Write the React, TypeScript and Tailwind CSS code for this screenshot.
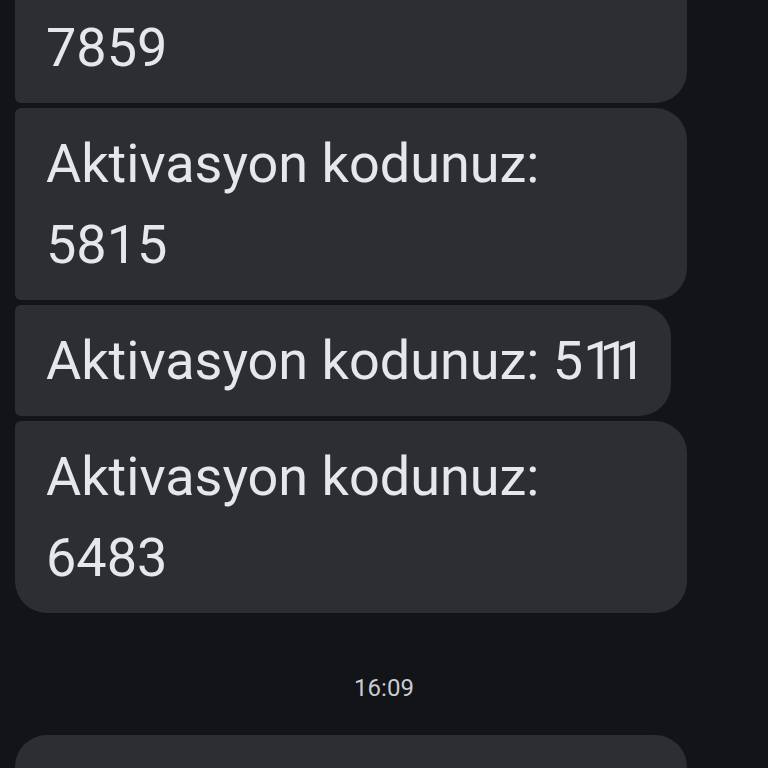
import { clsx } from 'clsx';

type Bubble = {
  lines: string[];
  wide: boolean;
  corners: string;
};

const font = { fontFamily: 'Roboto, "Noto Sans", sans-serif' };

const before: Bubble[] = [
  { lines: ['Aktivasyon kodunuz:', '7859'], wide: true, corners: 'rounded-l-[6px] rounded-r-[32px]' },
  { lines: ['Aktivasyon kodunuz:', '5815'], wide: true, corners: 'rounded-l-[6px] rounded-r-[32px]' },
  { lines: ['Aktivasyon kodunuz: 5111'], wide: false, corners: 'rounded-l-[6px] rounded-r-[32px]' },
  { lines: ['Aktivasyon kodunuz:', '6483'], wide: true, corners: 'rounded-tl-[6px] rounded-bl-[32px] rounded-r-[32px]' },
];

// the "1" digits in the original are narrow, Roboto's are tabular
function Line({ text }: { text: string }) {
  const m = text.match(/^(.*?)(1+)$/);
  if (!m) return <>{text}</>;
  return (
    <>
      {m[1]}
      <span className="tracking-[-14px]">{m[2]}</span>
    </>
  );
}

function MessageBubble({ bubble }: { bubble: Bubble }) {
  return (
    <div
      className={clsx(
        'bg-[#2d2e33] py-[15px] pl-[31px] text-[54px] leading-[81px] text-[#e6e7ec]',
        bubble.wide ? 'w-[672px] pr-[31px]' : 'w-fit pr-[39px]',
        bubble.corners
      )}
    >
      {bubble.lines.map((line) => (
        <div key={line} className="whitespace-nowrap">
          <Line text={line} />
        </div>
      ))}
    </div>
  );
}

export default function App() {
  return (
    <div className="h-[768px] w-[768px] overflow-hidden bg-[#131418]" style={font}>
      <div className="mt-[-89px] flex flex-col gap-[5px] pl-[15px]">
        {before.map((b, i) => (
          <MessageBubble key={i} bubble={b} />
        ))}
      </div>

      <div className="mt-[63px] text-center text-[24px] leading-[24px] text-[#c9cbd1]">16:09</div>

      <div className="mt-[35px] pl-[15px]">
        <MessageBubble
          bubble={{
            lines: ['Aktivasyon kodunuz:', '0000'],
            wide: true,
            corners: 'rounded-tl-[32px] rounded-bl-[6px] rounded-r-[32px]',
          }}
        />
      </div>
    </div>
  );
}
